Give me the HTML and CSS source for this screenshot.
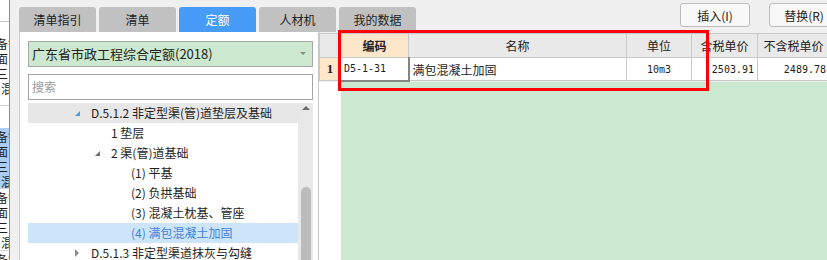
FILE: index.html
```html
<!DOCTYPE html>
<html lang="zh-cn">
<head>
<meta charset="utf-8">
<title>定额</title>
<link rel="stylesheet" href="styles.css">
</head>
<body>
<div class="screen">
	<div class="strip">
		<div class="strip-head"></div>
		<div class="strip-cell first"><p>备钢</p><p>面 -</p><p>三，</p><p class="ind">混</p></div>
		<div class="strip-gap"></div>
		<div class="strip-cell sel"><p>备钢</p><p>面 -</p><p>三，</p><p class="ind">混</p></div>
		<div class="strip-cell"><p>备钢</p><p>面 -</p><p>三，</p><p class="ind">混</p></div>
		<div class="strip-cell"><p>备钢</p></div>
	</div>
	<div class="main">
		<div class="topbar">
			<ul class="tabs">
				<li>清单指引</li>
				<li>清单</li>
				<li class="on">定额</li>
				<li>人材机</li>
				<li>我的数据</li>
			</ul>
			<div class="actions">
				<button>插入(I)</button>
				<button>替换(R)</button>
			</div>
		</div>
		<div class="body">
			<div class="side">
				<div class="select">广东省市政工程综合定额(2018)<span class="caret"></span></div>
				<div class="search">搜索</div>
				<div class="tree">
					<ul class="nodes">
						<li class="lv0 hover"><span class="tog open blue"></span>D.5.1.2 非定型渠(管)道垫层及基础</li>
						<li class="lv1"><span class="tog"></span>1 垫层</li>
						<li class="lv1"><span class="tog open"></span>2 渠(管)道基础</li>
						<li class="lv2"><span class="tog"></span>(1) 平基</li>
						<li class="lv2"><span class="tog"></span>(2) 负拱基础</li>
						<li class="lv2"><span class="tog"></span>(3) 混凝土枕基、管座</li>
						<li class="lv2 sel"><span class="tog"></span>(4) 满包混凝土加固</li>
						<li class="lv0"><span class="tog shut"></span>D.5.1.3 非定型渠道抹灰与勾缝</li>
					</ul>
					<div class="vscroll"><span class="up"></span><span class="thumb"></span></div>
				</div>
			</div>
			<div class="grid">
				<table class="sheet">
					<colgroup>
						<col class="c-rn"><col class="c-code"><col class="c-name"><col class="c-unit"><col class="c-tax"><col class="c-notax">
					</colgroup>
					<tr class="head">
						<th></th>
						<th class="key">编码</th>
						<th>名称</th>
						<th>单位</th>
						<th>含税单价</th>
						<th>不含税单价</th>
					</tr>
					<tr class="row">
						<td class="rn">1</td>
						<td class="edit mono">D5-1-31</td>
						<td>满包混凝土加固</td>
						<td class="mono mid">10m3</td>
						<td class="mono num">2503.91</td>
						<td class="mono num">2489.78</td>
					</tr>
				</table>
				<div class="fill"><span class="fill-rn"></span><span class="fill-green"></span></div>
			</div>
		</div>
	</div>
	<div class="mark"></div>
</div>
</body>
</html>
```

FILE: styles.css
```css
*{margin:0;padding:0;box-sizing:border-box;}
body{background:#f0f0f0;font-family:"Noto Sans CJK SC","Noto Sans",sans-serif;font-size:12px;color:#1e1e1e;}
ul{list-style:none;}
.screen{position:relative;width:827px;height:260px;display:flex;overflow:hidden;background:#f0f0f0;}

/* cut off window on the left */
.strip{width:10px;background:#fff;border-right:1px solid #8c8c8c;overflow:hidden;white-space:nowrap;}
.strip-head{height:22px;border-bottom:1px solid #c4c4c4;}
.strip-cell{padding-top:1px;border-bottom:1px solid #d4d4d4;}
.strip-cell.first{height:84px;padding-top:14px;}
.strip-cell.sel{background:#a9cdf5;height:61px;}
.strip-cell p{height:15px;line-height:15px;margin-left:-4px;}
.strip-cell p.ind{margin-left:1px;}
.strip-gap{height:22px;}

.main{flex:1;display:flex;flex-direction:column;padding-left:9px;min-width:0;}

/* tabs + buttons */
.topbar{height:32px;display:flex;flex-shrink:0;}
.tabs{display:flex;gap:3px;margin-top:7px;height:25px;}
.tabs li{width:77px;height:25px;line-height:25px;text-align:center;background:#c1c1c1;border-radius:3px 3px 0 0;color:#222;}
.tabs li.on{background:#469cf6;color:#fff;}
.actions{margin-left:auto;margin-right:-12px;margin-top:3px;display:flex;gap:19px;height:24px;}
.actions button{width:70px;height:24px;background:#f8f8f8;border:1px solid #bdbdbd;border-radius:3px;font:12px "Noto Sans CJK SC",sans-serif;color:#222;}

.body{flex:1;display:flex;min-height:0;}

/* left panel */
.side{width:300px;flex-shrink:0;background:#fff;border-left:1px solid #c8c8c8;border-right:1px solid #c8c8c8;padding:9px 5px 0 8px;display:flex;flex-direction:column;}
.select{position:relative;height:26px;line-height:24px;border:1px solid #a8a8a8;background:#cce8cf;padding-left:3px;font-size:13px;color:#222;}
.caret{position:absolute;right:6px;top:10px;width:0;height:0;border-left:3px solid transparent;border-right:3px solid transparent;border-top:3px solid #8a8a8a;}
.search{margin-top:7px;height:26px;line-height:24px;border:1px solid #a4a4a4;padding-left:3px;color:#9a9a9a;}
.tree{margin-top:3px;flex:1;display:flex;min-height:0;}
.nodes{flex:1;overflow:hidden;}
.nodes li{height:20px;line-height:20px;white-space:nowrap;}
.nodes li.hover{background:#e7e7e7;}
.nodes li.sel{background:#cde5fa;color:#3f82d8;}
.lv0{padding-left:46px;}
.lv1{padding-left:66px;}
.lv2{padding-left:86px;}
.tog{display:inline-block;width:17px;height:20px;vertical-align:top;position:relative;}
.tog.open::before{content:"";position:absolute;left:1px;top:8px;border-left:5px solid transparent;border-bottom:5px solid #6f6f6f;}
.tog.open.blue::before{border-bottom-color:#4a9ce8;}
.tog.shut::before{content:"";position:absolute;left:1px;top:6px;border-top:4px solid transparent;border-bottom:4px solid transparent;border-left:4px solid #8c8c8c;}
.vscroll{width:15px;background:#e8e8e8;display:flex;flex-direction:column;align-items:center;padding-top:3px;}
.vscroll .up{width:0;height:0;border-left:4px solid transparent;border-right:4px solid transparent;border-bottom:4px solid #6e6e6e;}
.vscroll .thumb{margin-top:auto;width:10px;height:73px;background:#bcbcbc;border-radius:5px 5px 0 0;}

/* grid */
.grid{flex:1;min-width:0;overflow:hidden;padding-top:1px;display:flex;flex-direction:column;}
.sheet{border-collapse:collapse;table-layout:fixed;width:510px;}
.c-rn{width:21px;}
.c-code{width:68px;}
.c-name{width:218px;}
.c-unit{width:65px;}
.c-tax{width:66px;}
.c-notax{width:72px;}
.sheet th,.sheet td{border:1px solid #c8c8c8;white-space:nowrap;overflow:hidden;}
.sheet .head{height:24px;}
.sheet th{background:#e9e9e9;font-weight:normal;color:#222;}
.sheet th.key{background:#fde6c9;font-weight:bold;}
.sheet .row{height:23px;background:#fff;}
.sheet td{padding:0 3px;}
.sheet td.rn{background:#fde6c9;text-align:center;font:bold 13px "Liberation Serif",serif;}
.sheet td.edit{border-left:1px solid #5b9be6;border-top:1px solid #5b9be6;border-right:2px solid #858585;border-bottom:2px solid #858585;}
.mono{font-family:"DejaVu Sans Mono",monospace;font-size:10px;}
.sheet td.mid{text-align:center;}
.sheet td.num{text-align:right;}
.fill{flex:1;display:flex;}
.fill-rn{width:22px;background:#fff;}
.fill-green{flex:1;background:#cde8d0;}

/* red highlight frame */
.mark{position:absolute;left:338px;top:30px;width:371px;height:61px;border:3px solid #f00;}
```
